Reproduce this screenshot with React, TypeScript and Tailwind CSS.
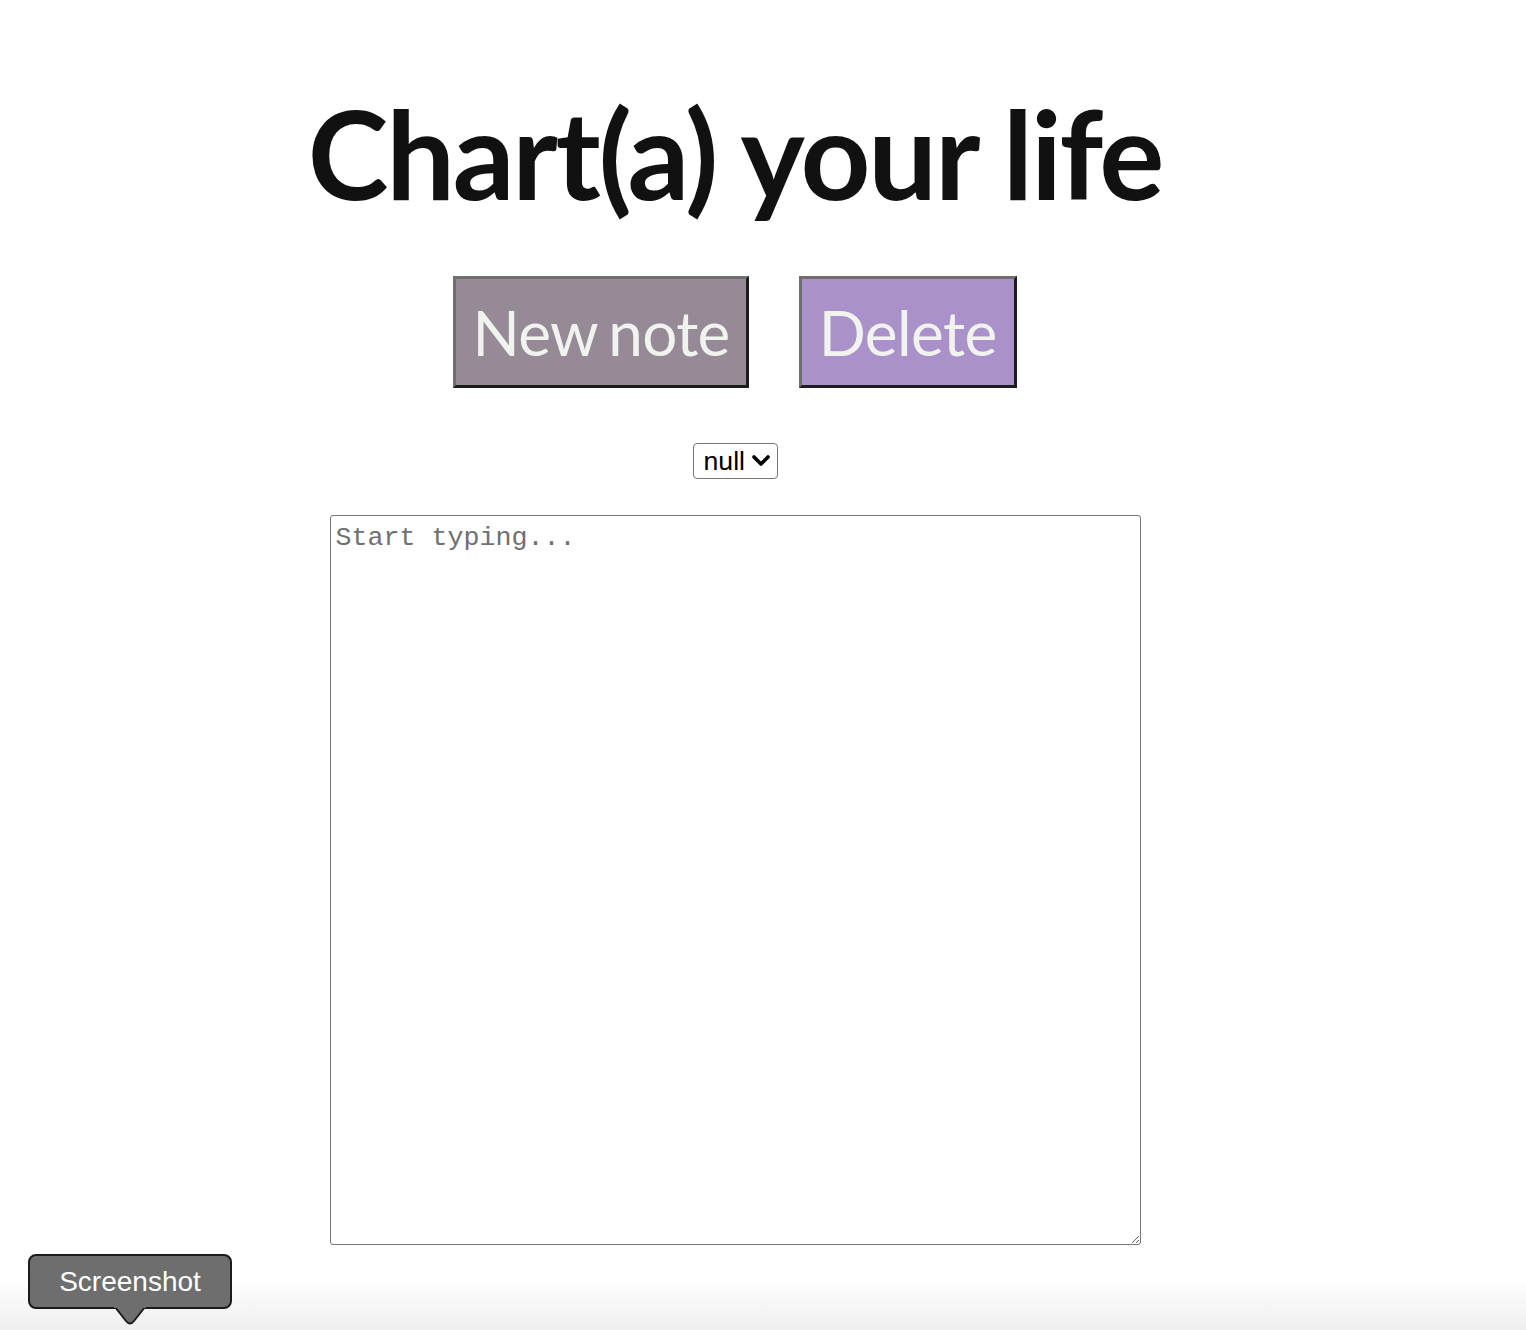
import React from "react";

export default function App() {
  return (
    <div className="relative min-h-[1330px] w-full overflow-hidden bg-white">
      <div className="flex flex-col items-center pr-[56px]">
        <h1 className="mt-[62px] text-[122px] font-bold leading-normal tracking-[-2.3px] text-[#111111] [font-family:Lato,'Open_Sans',sans-serif]">
          Chart(a) your life
        </h1>
        <div className="mt-[31px] flex items-center gap-[50px]">
          <button className="flex h-[112px] items-center border-[3px] border-t-[#6f6f6f] border-l-[#6f6f6f] border-b-[#1c1c1c] border-r-[#1c1c1c] bg-[#958a96] px-[16px] text-[62px] leading-normal tracking-[-0.6px] [word-spacing:-4px] text-[#f1f4ee] [font-family:Lato,sans-serif]">
            New note
          </button>
          <button className="flex h-[112px] items-center border-[3px] border-t-[#6f6f6f] border-l-[#6f6f6f] border-b-[#1c1c1c] border-r-[#1c1c1c] bg-[#aa91ca] px-[17px] text-[62px] leading-normal tracking-[-0.6px] text-[#f1f4ee] [font-family:Lato,sans-serif]">
            Delete
          </button>
        </div>
        <div className="relative mt-[55px] h-[36px] w-[85px]">
          <select className="h-full w-full appearance-none rounded-[4px] border border-[#767676] bg-white pl-[10px] pr-[30px] text-[26.67px] leading-none text-black [font-family:'Liberation_Sans',Arial,sans-serif] outline-none">
            <option>null</option>
          </select>
          <svg
            className="pointer-events-none absolute right-[7px] top-[10px]"
            width="20"
            height="16"
            viewBox="0 0 20 16"
          >
            <path d="M3 4 L10 11 L17 4" fill="none" stroke="#000" strokeWidth="3.6" strokeLinecap="round" strokeLinejoin="round" />
          </svg>
        </div>
        <textarea
          placeholder="Start typing..."
          className="mt-[36px] h-[730px] w-[811px] rounded-[3px] border border-[#767676] bg-white px-[5px] pt-[2px] pb-[5px] text-[26.67px] text-black [font-family:'Liberation_Mono','Courier_New',monospace] placeholder:text-[#707070] outline-none"
        />
      </div>

      <div className="pointer-events-none absolute bottom-0 left-0 h-[52px] w-full bg-gradient-to-b from-[#ffffff] to-[#efefef]" />

      <div className="absolute left-[28px] top-[1254px]">
        <div className="relative flex h-[55px] w-[204px] items-center justify-center rounded-[8px] border-2 border-[#1b1b1b] bg-[#6e6e6e] text-[28px] text-white [font-family:'Liberation_Sans',Arial,sans-serif]">
          Screenshot
        </div>
        <svg className="absolute left-[86px] top-[52px]" width="32" height="20" viewBox="0 0 32 20">
          <path d="M1 1 L12 15 Q16 20 20 15 L31 1 Z" fill="#6e6e6e" stroke="#1b1b1b" strokeWidth="2" strokeLinejoin="round" />
          <rect x="0" y="0" width="32" height="2" fill="#6e6e6e" />
        </svg>
      </div>
    </div>
  );
}
